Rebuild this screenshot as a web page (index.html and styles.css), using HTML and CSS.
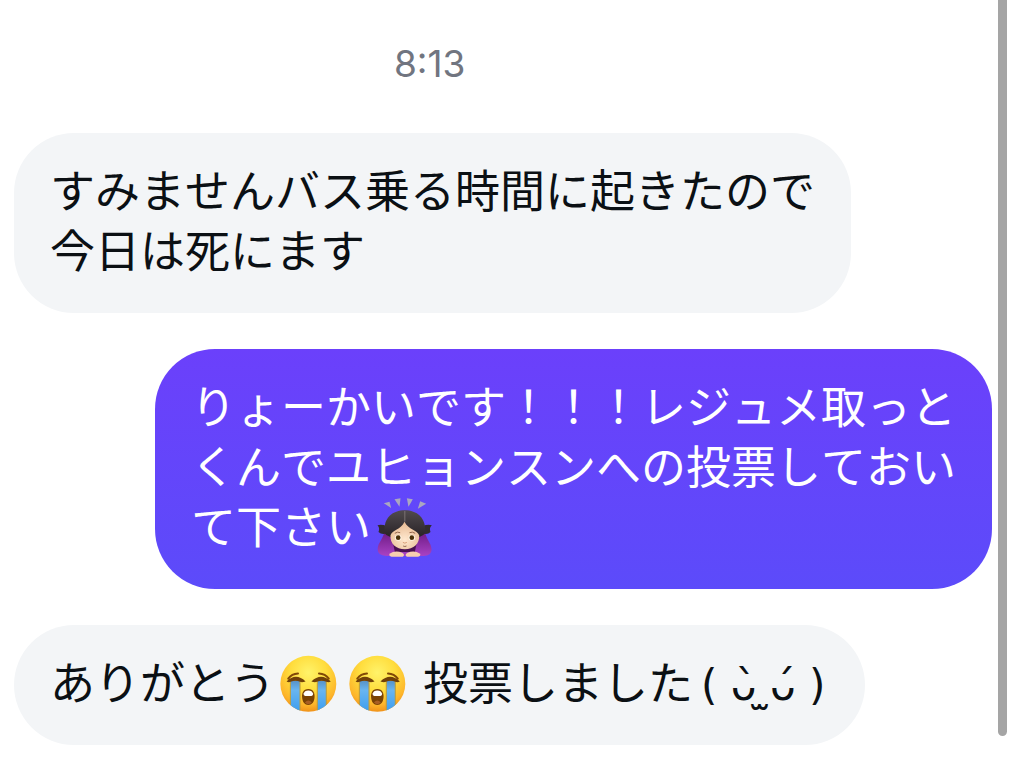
FILE: index.html
```
<!DOCTYPE html>
<html lang="ja">
<head>
<meta charset="utf-8">
<title>Messages</title>
<link rel="stylesheet" href="styles.css">
</head>
<body>

<!-- shared emoji drawing -->
<svg class="defs" width="0" height="0" aria-hidden="true">
  <defs>
    <radialGradient id="face" cx="50%" cy="30%" r="72%">
      <stop offset="0" stop-color="#fff36a"/>
      <stop offset="0.45" stop-color="#ffdd3d"/>
      <stop offset="0.8" stop-color="#fdb52b"/>
      <stop offset="1" stop-color="#ee8c16"/>
    </radialGradient>
    <linearGradient id="tear" x1="0" y1="0" x2="0" y2="1">
      <stop offset="0" stop-color="#5790c4"/>
      <stop offset="0.3" stop-color="#69b5f0"/>
      <stop offset="1" stop-color="#399cf0"/>
    </linearGradient>
    <clipPath id="faceClip"><circle cx="82" cy="82" r="81"/></clipPath>
    <symbol id="sob" viewBox="0 0 165 165">
      <circle cx="82" cy="82" r="81" fill="url(#face)"/>
      <g clip-path="url(#faceClip)" fill="url(#tear)" stroke="#bd9c3b" stroke-width="3">
        <path d="M30 72h28v95H30z"/>
        <path d="M108 72h26v95h-26z"/>
      </g>
      <g fill="none" stroke="#804807" stroke-width="6" stroke-linecap="round">
        <path d="M24 67Q34 53 52 52"/>
        <path d="M141 67Q131 53 113 52"/>
      </g>
      <path d="M19 75Q46 48 74 75Q63 79 58 76Q45 70 31 76Q25 79 19 75z" fill="#704009"/>
      <path d="M91 75Q119 48 147 75Q141 79 134 76Q120 70 107 76Q101 79 91 75z" fill="#704009"/>
      <path d="M82 97C97 97 101 110 100 121C99 136 92 143 82 143S65 136 64 121C63 110 67 97 82 97z" fill="#794204"/>
      <path d="M68 111Q71 101 82 101T96 111Q96 117 91 117H73Q68 117 68 111z" fill="#fff"/>
      <path d="M72 136Q82 125 92 136Q82 146 72 136z" fill="#a75d24"/>
    </symbol>
  </defs>
</svg>

<main class="chat">
  <time class="time">8:13</time>

  <div class="bubble received">すみませんバス乗る時間に起きたので<br>今日は死にます</div>

  <div class="bubble sent">りょーかいです！！！レジュメ取っと<br>くんでユヒョンスンへの投票しておい<br>て下さい<svg class="emoji" viewBox="35 36 168 180" role="img" aria-label="お辞儀">
      <defs>
        <linearGradient id="hair" x1="0" y1="0" x2="0" y2="1">
          <stop offset="0" stop-color="#514b4e"/>
          <stop offset="1" stop-color="#292327"/>
        </linearGradient>
        <linearGradient id="sleeve" x1="0" y1="0" x2="0" y2="1">
          <stop offset="0" stop-color="#6e1b83"/>
          <stop offset="1" stop-color="#a942c4"/>
        </linearGradient>
        <radialGradient id="skin" cx="50%" cy="65%" r="60%">
          <stop offset="0" stop-color="#ffe8cf"/>
          <stop offset="1" stop-color="#e9bd97"/>
        </radialGradient>
      </defs>
      <g fill="#aaa7c0">
        <path d="M57 52l17-5 5 19z"/>
        <path d="M89 40l18-3-3 25z"/>
        <path d="M126 37l18 3-13 22z"/>
        <path d="M166 46l18 7-25 15z"/>
      </g>
      <path d="M60 138H179Q186 158 197 176Q209 208 176 210H64Q30 208 41 176Q52 158 60 138z" fill="url(#sleeve)"/>
      <path d="M84 168H156L150 198H90z" fill="#491050"/>
      <path d="M66 121Q50 114 38 118Q46 126 41 138Q52 149 68 141z" fill="#302b2e"/>
      <path d="M173 121Q189 114 201 118Q192 126 197 138Q187 149 171 141z" fill="#302b2e"/>
      <path d="M59 140C55 95 84 73 120 73S184 95 181 140Q176 150 165 152H75Q64 150 59 140z" fill="url(#hair)"/>
      <path d="M77 148C82 130 108 132 119 107C131 132 157 130 163 148C165 174 146 190 120 190S75 174 77 148z" fill="url(#skin)"/>
      <path d="M120 75V107" stroke="#958b8b" stroke-width="2"/>
      <ellipse cx="100" cy="155" rx="10" ry="9" fill="#fff5e5"/>
      <ellipse cx="141" cy="155" rx="10" ry="9" fill="#fff5e5"/>
      <circle cx="100" cy="155" r="7" fill="#49300a"/>
      <circle cx="141" cy="155" r="7" fill="#49300a"/>
      <path d="M90 142Q98 136 106 140M134 140Q143 136 151 142M115 180Q120 183 125 180" fill="none" stroke="#92664c" stroke-width="3"/>
      <path d="M114 169Q120 174 126 169" fill="none" stroke="#d99e78" stroke-width="3"/>
      <path d="M74 203Q91 192 112 200Q122 206 114 212H80Q72 210 74 203z" fill="#f6ceb0"/>
      <path d="M166 203Q149 192 128 200Q118 206 126 212H160Q168 210 166 203z" fill="#f6ceb0"/>
    </svg></div>

  <div class="bubble received">ありがとう<svg class="emoji" role="img" aria-label="大泣き"><use href="#sob"/></svg><svg class="emoji" role="img" aria-label="大泣き"><use href="#sob"/></svg> 投票しました<span class="kaomoji">( ᴗ̀ ̫ᴗ́ )</span></div>
</main>

<div class="scrollbar"></div>

</body>
</html>
```
FILE: styles.css
```
body {
  margin: 0;
  background: #fff;
  color: #0b1014;
  font-family: "Noto Sans CJK JP", sans-serif;
  font-size: 45px;
  font-kerning: none;
  line-height: 60px;
}
.defs {
  position: absolute;
}
.chat {
  display: flex;
  flex-direction: column;
  gap: 36px;
  padding: 34px 23px 20px 14px;
}
.time {
  margin-bottom: 3px;
  padding-right: 15%;
  color: #717580;
  font-family: Inter, sans-serif;
  font-size: 37px;
  text-align: center;
}
.bubble {
  padding: 26px 36px 34px;
  border-radius: 60px;
  white-space: nowrap;
}
.received {
  align-self: flex-start;
  background: #f3f5f7;
}
.sent {
  align-self: flex-end;
  background: linear-gradient(#6b40fb, #5c4bfa);
  color: #fff;
}
.emoji {
  width: 57px;
  height: 60px;
  margin: -10px 7px -10px 5px;
  vertical-align: -4px;
}
.kaomoji {
  margin: 0 4px 0 8px;
  font-family: "DejaVu Sans", sans-serif;
  font-size: 42px;
  line-height: 1;
}
.scrollbar {
  position: absolute;
  top: 0;
  right: 8px;
  bottom: 29px;
  width: 9px;
  border-radius: 0 0 5px 5px;
  background: #a5a5a5;
}
```
